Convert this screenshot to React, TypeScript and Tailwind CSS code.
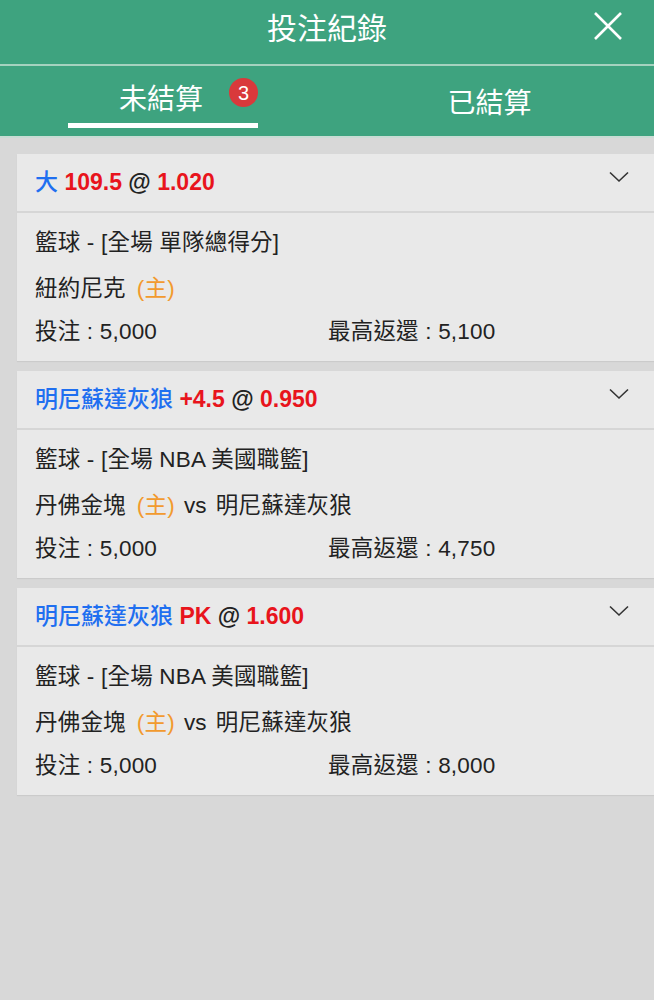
import React from "react";

const FONT = { fontFamily: '"Liberation Sans", Arial, "Noto Sans CJK TC", sans-serif' };

interface Bet {
  team: string;
  line: string;
  odds: string;
  league: string;
  home: string;
  away?: string;
  stake: string;
  payout: string;
}

const BETS: Bet[] = [
  {
    team: "大",
    line: "109.5",
    odds: "1.020",
    league: "籃球 - [全場 單隊總得分]",
    home: "紐約尼克",
    stake: "5,000",
    payout: "5,100",
  },
  {
    team: "明尼蘇達灰狼",
    line: "+4.5",
    odds: "0.950",
    league: "籃球 - [全場 NBA 美國職籃]",
    home: "丹佛金塊",
    away: "明尼蘇達灰狼",
    stake: "5,000",
    payout: "4,750",
  },
  {
    team: "明尼蘇達灰狼",
    line: "PK",
    odds: "1.600",
    league: "籃球 - [全場 NBA 美國職籃]",
    home: "丹佛金塊",
    away: "明尼蘇達灰狼",
    stake: "5,000",
    payout: "8,000",
  },
];

function Chevron() {
  return (
    <svg width="20" height="12" viewBox="0 0 20 12" fill="none">
      <path d="M1 1.5 L10 10 L19 1.5" stroke="#333" strokeWidth="1.6" />
    </svg>
  );
}

function BetCard({ bet }: { bet: Bet }) {
  return (
    <div className="bg-[#e9e9e9] shadow-[0_1px_1px_rgba(0,0,0,0.06)]">
      <div className="h-[57px] flex items-center justify-between pl-[18px] pr-[25px]">
        <div className="text-[23px] font-bold">
          <span className="text-[#1f6ff0] font-medium">{bet.team}</span>{" "}
          <span className="text-[#e8141c]">{bet.line}</span>{" "}
          <span className="text-[#222]">@</span>{" "}
          <span className="text-[#e8141c]">{bet.odds}</span>
        </div>
        <div className="-mt-3">
          <Chevron />
        </div>
      </div>
      <div className="h-[2px] bg-[#d6d6d6]" />
      <div className="pl-[18px] py-[8px] text-[22.5px] text-[#222] tracking-[0.2px]">
        <div className="h-[44px] flex items-center">{bet.league}</div>
        <div className="h-[44px] flex items-center mt-[2px]">
          <span>{bet.home}</span>
          <span className="text-[#f29a2e] ml-[11px]">(主)</span>
          {bet.away && (
            <>
              <span className="ml-[9px]">vs</span>
              <span className="ml-[9px]">{bet.away}</span>
            </>
          )}
        </div>
        <div className="h-[42px] flex items-center">
          <span className="w-[293px]">投注 : {bet.stake}</span>
          <span>最高返還 : {bet.payout}</span>
        </div>
      </div>
    </div>
  );
}

export default function App() {
  return (
    <div className="w-[654px] h-[1000px] bg-[#d8d8d8]" style={FONT}>
      <div className="bg-[#3ea37f]">
        <div className="h-[64px] relative flex items-center justify-center">
          <span className="text-white text-[30px] -mt-[8px]">投注紀錄</span>
          <svg className="absolute right-[32px] top-[12px]" width="28" height="28" viewBox="0 0 28 28">
            <path d="M1 1 L27 27 M27 1 L1 27" stroke="white" strokeWidth="2.6" />
          </svg>
        </div>
        <div className="h-[2px] bg-[#a5d2bf]" />
        <div className="h-[70px] flex">
          <div className="w-[327px] flex justify-end pr-[69px]">
            <div className="w-[190px] flex flex-col items-center">
              <div className="relative mt-[13px] h-[42px] flex items-center text-white text-[28px]">
                <span className="-ml-[4px]">未結算</span>
                <span className="absolute left-[106px] top-[-1px] w-[29px] h-[29px] rounded-full bg-[#d9393b] text-white text-[20px] flex items-center justify-center">
                  3
                </span>
              </div>
              <div className="w-[190px] h-[5px] bg-white mt-[2px]" />
            </div>
          </div>
          <div className="flex-1 flex justify-center">
            <span className="text-white text-[28px] mt-[17px] -ml-[2px]">已結算</span>
          </div>
        </div>
      </div>
      <div className="h-[2px] bg-[#c8dcd4]" />
      <div className="px-[17px] pt-[16px] flex flex-col gap-[10px] w-[637px] box-content pr-0">
        {BETS.map((b, i) => (
          <BetCard key={i} bet={b} />
        ))}
      </div>
    </div>
  );
}
